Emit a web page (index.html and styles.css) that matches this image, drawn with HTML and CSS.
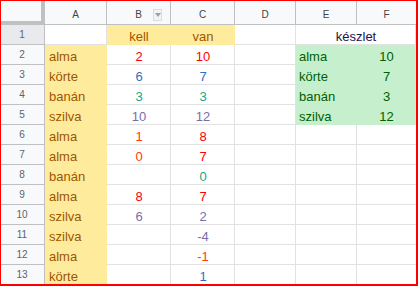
FILE: index.html
```html
<!DOCTYPE html>
<html lang="hu">
<head>
<meta charset="utf-8">
<title>készlet</title>
<link rel="stylesheet" href="styles.css">
</head>
<body>
<div class="frame">
  <div class="sheet">
    <div class="corner"></div>
    <div class="ch">A</div>
    <div class="ch filt">B<span class="fbtn"><svg width="6" height="4" viewBox="0 0 6 4"><path d="M0 0h6L3 4z" fill="#9aa0a6"/></svg></span></div>
    <div class="ch">C</div>
    <div class="ch">D</div>
    <div class="ch">E</div>
    <div class="ch last">F</div>

    <div class="rh sel">1</div>
    <div class="c"></div>
    <div class="c y n">kell</div>
    <div class="c y n">van</div>
    <div class="c"></div>
    <div class="c span2 n title">készlet</div>

    <div class="rh">2</div>
    <div class="c y l">alma</div>
    <div class="c n red">2</div>
    <div class="c n red">10</div>
    <div class="c"></div>
    <div class="c g l">alma</div>
    <div class="c g n last">10</div>

    <div class="rh">3</div>
    <div class="c y l">körte</div>
    <div class="c n blue">6</div>
    <div class="c n blue">7</div>
    <div class="c"></div>
    <div class="c g l">körte</div>
    <div class="c g n last">7</div>

    <div class="rh">4</div>
    <div class="c y l">banán</div>
    <div class="c n teal">3</div>
    <div class="c n teal">3</div>
    <div class="c"></div>
    <div class="c g l">banán</div>
    <div class="c g n last">3</div>

    <div class="rh">5</div>
    <div class="c y l">szilva</div>
    <div class="c n plum">10</div>
    <div class="c n plum">12</div>
    <div class="c"></div>
    <div class="c g l">szilva</div>
    <div class="c g n last">12</div>

    <div class="rh">6</div>
    <div class="c y l">alma</div>
    <div class="c n orange">1</div>
    <div class="c n red">8</div>
    <div class="c"></div>
    <div class="c"></div>
    <div class="c last"></div>

    <div class="rh">7</div>
    <div class="c y l">alma</div>
    <div class="c n orange">0</div>
    <div class="c n red">7</div>
    <div class="c"></div>
    <div class="c"></div>
    <div class="c last"></div>

    <div class="rh">8</div>
    <div class="c y l">banán</div>
    <div class="c"></div>
    <div class="c n teal">0</div>
    <div class="c"></div>
    <div class="c"></div>
    <div class="c last"></div>

    <div class="rh">9</div>
    <div class="c y l">alma</div>
    <div class="c n red">8</div>
    <div class="c n red">7</div>
    <div class="c"></div>
    <div class="c"></div>
    <div class="c last"></div>

    <div class="rh">10</div>
    <div class="c y l">szilva</div>
    <div class="c n plum">6</div>
    <div class="c n plum">2</div>
    <div class="c"></div>
    <div class="c"></div>
    <div class="c last"></div>

    <div class="rh">11</div>
    <div class="c y l">szilva</div>
    <div class="c"></div>
    <div class="c n plum">-4</div>
    <div class="c"></div>
    <div class="c"></div>
    <div class="c last"></div>

    <div class="rh">12</div>
    <div class="c y l">alma</div>
    <div class="c"></div>
    <div class="c n orange">-1</div>
    <div class="c"></div>
    <div class="c"></div>
    <div class="c last"></div>

    <div class="rh">13</div>
    <div class="c y l">körte</div>
    <div class="c"></div>
    <div class="c n blue">1</div>
    <div class="c"></div>
    <div class="c"></div>
    <div class="c last"></div>
  </div>
</div>
</body>
</html>
```

FILE: styles.css
```css
* { box-sizing: border-box; }
html, body { margin: 0; padding: 0; background: #fff; }

.frame {
  width: 418px;
  height: 286px;
  border-style: solid;
  border-color: #f00;
  border-width: 1px 2px 2px 1px;
  overflow: hidden;
}

.sheet {
  display: grid;
  grid-template-columns: 44px 62px 64px 64px 61px 61px 59px;
  grid-template-rows: 24px repeat(13, 20px);
  font-family: "Liberation Sans", Arial, sans-serif;
}

.corner {
  background: #f8f9fa;
  border-right: 4px solid #c0c0c0;
  border-bottom: 4px solid #c0c0c0;
}

.ch {
  position: relative;
  background: #f8f9fa;
  border-right: 1px solid #c0c0c0;
  border-bottom: 1px solid #c0c0c0;
  display: flex;
  align-items: center;
  justify-content: center;
  padding-top: 3px;
  font-size: 10px;
  color: #444;
}
.ch.last { border-right: none; }

.fbtn {
  position: absolute;
  right: 8px;
  top: 8px;
  width: 9px;
  height: 12px;
  border: 1px solid #dadce0;
  background: #f1f3f4;
  display: flex;
  align-items: center;
  justify-content: center;
}

.rh {
  background: #f8f9fa;
  border-right: 1px solid #c0c0c0;
  border-bottom: 1px solid #c0c0c0;
  display: flex;
  align-items: center;
  justify-content: center;
  font-size: 10px;
  color: #5f6368;
  padding-right: 1px;
}
.rh.sel { background: #e8eaed; }

.c {
  border-right: 1px solid #e2e2e2;
  border-bottom: 1px solid #e2e2e2;
  display: flex;
  align-items: flex-end;
  font-size: 13px;
  line-height: 13px;
  padding: 0 3px 1px 4px;
  white-space: nowrap;
}
.c.last { border-right: none; }
.span2 { grid-column: span 2; }

.l { justify-content: flex-start; }
.n { justify-content: center; }

.y { background: #ffeb9c; border-color: #ffeb9c; color: #9c5700; }
.g { background: #c6efce; border-color: #c6efce; color: #006100; padding-left: 3px; }

.title { color: #20124d; }

.red { color: #ff0000; }
.orange { color: #ff3b0a; }
.blue { color: #2b6fc4; }
.teal { color: #1aa67e; }
.plum { color: #7a6ea8; }
```
